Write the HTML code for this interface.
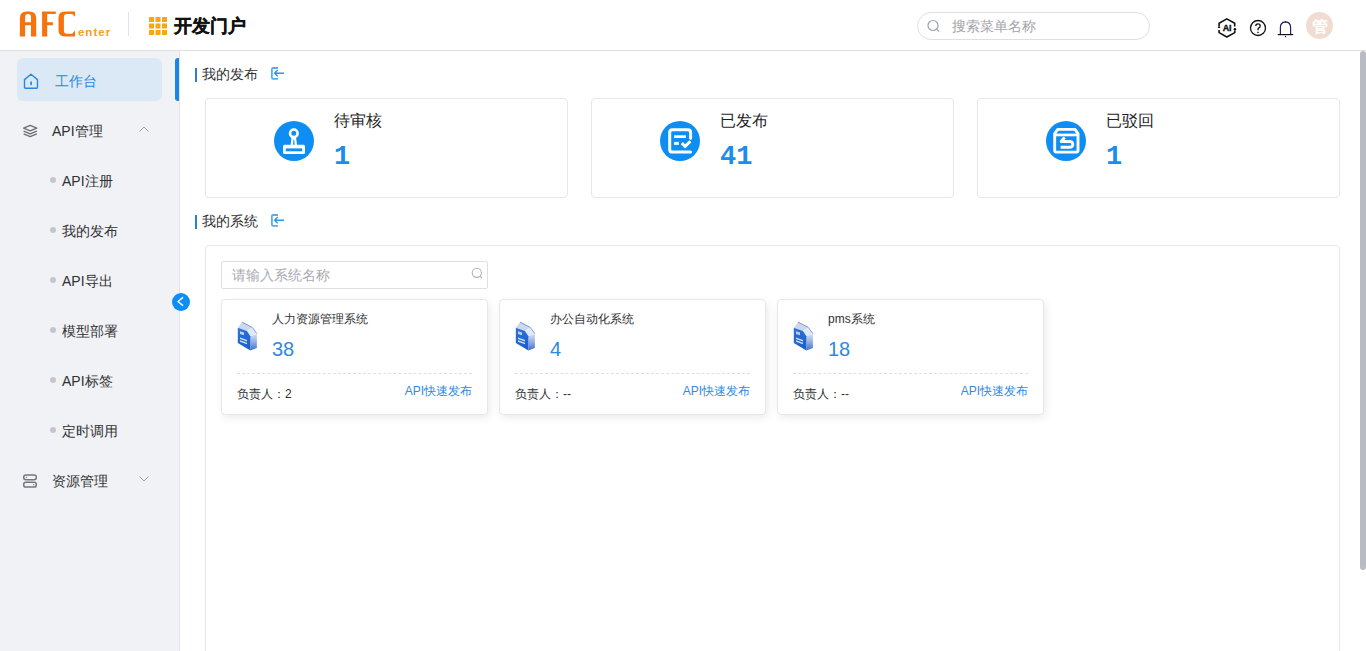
<!DOCTYPE html>
<html><head><meta charset="utf-8">
<style>
*{margin:0;padding:0;box-sizing:border-box}
html,body{width:1366px;height:651px;overflow:hidden;background:#fff;font-family:"Liberation Sans",sans-serif;color:#303133}
.abs{position:absolute}
#hdr{position:absolute;left:0;top:0;width:1366px;height:51px;background:#fff;border-bottom:1px solid #dfdfe1}
#side{position:absolute;left:0;top:51px;width:180px;height:600px;background:#f0f2f5;border-right:1px solid #e3e4e7}
.mi{position:absolute;left:0;width:180px;height:20px;font-size:14px;line-height:20px;color:#303133}
.sub{position:absolute;left:62px;margin-top:1px;font-size:14px;line-height:20px;color:#303133;white-space:nowrap}
.dot{position:absolute;left:50px;margin-top:1px;width:6px;height:6px;border-radius:50%;background:#c4c6ca}
.card{position:absolute;top:98px;width:363px;height:100px;border:1px solid #e4e7ed;border-radius:4px;background:#fff}
.circ{position:absolute;left:68px;top:22px;width:40px;height:40px;border-radius:50%;background:#0e8ef2}
.ctitle{position:absolute;left:128px;top:11px;font-size:16px;line-height:22px;color:#1f1f1f;white-space:nowrap}
.cnum{position:absolute;left:128px;top:43px;font-size:27px;line-height:30px;font-weight:bold;color:#1a8cf2;font-family:"Liberation Mono",monospace}
.stitle{position:absolute;left:195px;font-size:14px;line-height:20px;color:#303133;white-space:nowrap}
.stitle .bar{position:absolute;left:0;top:4px;width:2px;height:14px;background:#2b7fc8}
.stitle .t{position:absolute;left:7px;top:0}
.scard{position:absolute;top:299px;width:267px;height:116px;background:#fff;border:1px solid #e6e7eb;border-radius:4px;box-shadow:2px 3px 8px rgba(0,0,0,0.08)}
.scard .nm{position:absolute;left:50px;top:11px;font-size:12px;line-height:16px;color:#303133;white-space:nowrap}
.scard .n{position:absolute;left:50px;top:37px;font-size:20px;line-height:24px;color:#2e89e0}
.scard .dash{position:absolute;left:15px;top:73px;width:235px;height:1px;border-top:1px dashed #dcdfe6}
.scard .own{position:absolute;left:15px;top:86px;font-size:12px;line-height:16px;color:#303133;white-space:nowrap}
.scard .lnk{position:absolute;right:15px;top:83px;font-size:12px;line-height:16px;color:#2f8ae3;white-space:nowrap}
.scard .ic{position:absolute;left:15px;top:21px}
</style></head><body>

<div id="hdr">
  <!-- logo -->
  <svg class="abs" style="left:0;top:0" width="130" height="50" viewBox="0 0 130 50">
    <g fill="#f5730a">
      <path fill-rule="evenodd" d="M19.9 36.5V18Q19.9 11.4 26.5 11.4H29.6Q36.2 11.4 36.2 18V36.5H31V25.2H25.1V36.5ZM25.1 22.3H31V16.9Q31 13.9 28 13.9Q25.1 13.9 25.1 16.9Z"/>
      <path d="M42.1 36.5V11.4H55.8V14.1H47.2V22.3H52.9V25.2H47.2V36.5Z"/>
      <path d="M75 11.4H64.9Q58.5 11.4 58.5 17.8V30.1Q58.5 36.5 64.9 36.5H75V30.6L72.2 33.8H66.9Q63.9 33.8 63.9 30.8V17.1Q63.9 14.1 66.9 14.1H72.2L75 16.8Z"/>
    </g>
    <text x="77.9" y="36.1" font-family="Liberation Sans" font-weight="bold" font-size="11.5" fill="#f2a11c" textLength="32.4" lengthAdjust="spacing">enter</text>
    <rect x="128" y="12" width="1" height="24" fill="#dfe2e8"/>

  </svg>
  <svg class="abs" style="left:148px;top:16px" width="20" height="20" viewBox="148 16 20 20">
    <g fill="#f7a812">
      <rect x="149" y="17" width="5" height="5"/><rect x="155.5" y="17" width="5" height="5"/><rect x="162" y="17" width="5" height="5"/>
      <rect x="149" y="23.5" width="5" height="5"/><rect x="155.5" y="23.5" width="5" height="5"/><rect x="162" y="23.5" width="5" height="5"/>
      <rect x="149" y="30" width="5" height="5"/><rect x="155.5" y="30" width="5" height="5"/><rect x="162" y="30" width="5" height="5"/>
    </g>
  </svg>
  <div class="abs" style="left:174px;top:14px;font-size:18px;line-height:25px;font-weight:bold;color:#111;white-space:nowrap;-webkit-text-stroke:0.35px #111">开发门户</div>

  <!-- search -->
  <div class="abs" style="left:917px;top:12px;width:233px;height:28px;border:1px solid #dcdfe6;border-radius:14px"></div>
  <svg class="abs" style="left:926px;top:19px" width="15" height="14" viewBox="0 0 15 14">
    <circle cx="7" cy="6.5" r="5" fill="none" stroke="#a0a3a8" stroke-width="1.2"/>
    <path d="M10.6 10.1L13 12.5" stroke="#a0a3a8" stroke-width="1.2"/>
  </svg>
  <div class="abs" style="left:952px;top:16px;font-size:14px;line-height:20px;color:#a3a4a8;white-space:nowrap">搜索菜单名称</div>

  <!-- right icons -->
  <svg class="abs" style="left:1216px;top:17px" width="22" height="22" viewBox="0 0 22 22">
    <path d="M3.1 9.3V6.3L10.8 1.9L18.7 6.3V9.4" fill="none" stroke="#111" stroke-width="1.6" stroke-linejoin="round"/>
    <path d="M18.8 13.6V15.6L10.8 20L3.1 15.6V13.1" fill="none" stroke="#111" stroke-width="1.6" stroke-linejoin="round"/>
    <path d="M1.6 10.9L3.1 8.6L4.4 10.9Z" fill="#111"/>
    <circle cx="18.9" cy="12.3" r="1.3" fill="#111"/>
    <text x="11" y="13.8" text-anchor="middle" font-family="Liberation Sans" font-weight="bold" font-size="9" fill="#111" stroke="#111" stroke-width="0.35" letter-spacing="-0.2">AI</text>
  </svg>
  <svg class="abs" style="left:1248px;top:18px" width="20" height="20" viewBox="0 0 20 20">
    <circle cx="10" cy="10" r="7.5" fill="none" stroke="#111" stroke-width="1.3"/>
    <path d="M7.8 8.1Q7.8 5.9 10 5.9Q12.2 5.9 12.2 7.9Q12.2 9.2 10.9 9.9Q10 10.5 10 11.6V12.2" fill="none" stroke="#111" stroke-width="1.3"/>
    <rect x="9.3" y="13.8" width="1.4" height="1.3" fill="#111"/>
  </svg>
  <svg class="abs" style="left:1276px;top:19px" width="20" height="20" viewBox="0 0 20 20">
    <path d="M4.4 15.6V8.5Q4.4 3.2 9.5 2.9Q14.6 3.2 14.6 8.5V15.6" fill="none" stroke="#2a1f5a" stroke-width="1.2"/>
    <path d="M1.7 15.6H17.2" stroke="#111" stroke-width="1.2"/>
    <rect x="8.9" y="17" width="1.2" height="1.2" fill="#111"/>
    <path d="M8.5 3.3L9.5 1.9L10.5 3.3Z" fill="#111"/>
  </svg>
  <div class="abs" style="left:1306px;top:12px;width:27px;height:27px;border-radius:50%;background:#f1ddd0;color:#fff;font-size:16px;line-height:29px;text-align:center;font-weight:bold">管</div>
</div>

<div id="side">
  <div class="abs" style="left:17px;top:7px;width:145px;height:43px;border-radius:6px;background:#dbe9f7"></div>
  <!-- home icon -->
  <svg class="abs" style="left:22px;top:21px" width="18" height="18" viewBox="0 0 18 18">
    <path d="M2.5 7.6L9 2.2L15.5 7.6V15.3Q15.5 16.3 14.5 16.3H3.5Q2.5 16.3 2.5 15.3Z" fill="none" stroke="#2b86e0" stroke-width="1.4" stroke-linejoin="round"/>
    <path d="M9.1 10V12.4" stroke="#2b86e0" stroke-width="1.7" stroke-linecap="round"/>
  </svg>
  <div class="sub" style="left:55px;top:19px;color:#2b86e0">工作台</div>

  <!-- API管理 -->
  <svg class="abs" style="left:21px;top:72px" width="18" height="16" viewBox="0 0 18 16">
    <path d="M9.2 2.3L15.8 5.1L9.2 7.9L2.6 5.1Z" fill="none" stroke="#6b6f75" stroke-width="1.3" stroke-linejoin="round"/>
    <path d="M2.6 8.1L9.2 10.9L15.8 8.1" fill="none" stroke="#6b6f75" stroke-width="1.3" stroke-linejoin="round"/>
    <path d="M2.6 10.9L9.2 13.7L15.8 10.9" fill="none" stroke="#6b6f75" stroke-width="1.3" stroke-linejoin="round"/>
  </svg>
  <div class="sub" style="left:52px;top:69px">API管理</div>
  <svg class="abs" style="left:138px;top:74px" width="12" height="8" viewBox="0 0 12 8">
    <path d="M1.5 6.5L6 2L10.5 6.5" fill="none" stroke="#9a9da3" stroke-width="1"/>
  </svg>

  <div class="dot" style="top:125px"></div><div class="sub" style="top:119px">API注册</div>
  <div class="dot" style="top:175px"></div><div class="sub" style="top:169px">我的发布</div>
  <div class="dot" style="top:225px"></div><div class="sub" style="top:219px">API导出</div>
  <div class="dot" style="top:275px"></div><div class="sub" style="top:269px">模型部署</div>
  <div class="dot" style="top:325px"></div><div class="sub" style="top:319px">API标签</div>
  <div class="dot" style="top:375px"></div><div class="sub" style="top:369px">定时调用</div>

  <!-- 资源管理 -->
  <svg class="abs" style="left:22px;top:422px" width="16" height="16" viewBox="0 0 16 16">
    <rect x="1.7" y="1.9" width="12.6" height="4.9" rx="2.2" fill="none" stroke="#74777c" stroke-width="1.5"/>
    <rect x="1.7" y="9.2" width="12.6" height="4.9" rx="2.2" fill="none" stroke="#74777c" stroke-width="1.5"/>
    <rect x="3.8" y="3.8" width="1.2" height="1" fill="#6b6f76"/><rect x="11" y="11.2" width="1.2" height="1" fill="#6b6f76"/>
  </svg>
  <div class="sub" style="left:52px;top:419px">资源管理</div>
  <svg class="abs" style="left:138px;top:424px" width="12" height="8" viewBox="0 0 12 8">
    <path d="M1.5 1.5L6 6L10.5 1.5" fill="none" stroke="#9a9da3" stroke-width="1"/>
  </svg>
</div>
<!-- collapse button -->
<div class="abs" style="left:172px;top:293px;width:18px;height:18px;border-radius:50%;background:#0d8ef5"></div>
<svg class="abs" style="left:172px;top:293px" width="18" height="18" viewBox="0 0 18 18">
  <path d="M10.7 4.6L6 8.5L10.7 12.4" fill="none" stroke="#fff" stroke-width="1.4" stroke-linecap="round" stroke-linejoin="round"/>
</svg>

<!-- section 1 -->
<div class="stitle" style="top:64px"><div class="bar"></div><div class="t">我的发布</div></div>
<svg class="abs" style="left:270px;top:66px" width="16" height="15" viewBox="0 0 16 15">
  <path d="M8 2H3Q1.9 2 1.9 3.1V11.8Q1.9 12.9 3 12.9H8" fill="none" stroke="#5aaee8" stroke-width="1.8"/>
  <path d="M14 7.2H4.6M7.7 4.1L4.6 7.2L7.7 10.3" fill="none" stroke="#2f95dc" stroke-width="1.4"/>
</svg>

<div class="card" style="left:205px">
  <div class="circ"></div>
  <svg class="abs" style="left:68px;top:22px" width="40" height="40" viewBox="0 0 40 40">
    <circle cx="19.8" cy="12.3" r="3.8" fill="none" stroke="#fff" stroke-width="2.6"/>
    <path d="M17.6 15.8H22L23 24.2H16.6Z" fill="#fff"/>
    <path d="M19.5 18.4H20.1L20.7 24H19Z" fill="#0e8ef2"/>
    <path d="M9 25.3Q9 23.8 10.5 23.8H29.5Q31 23.8 31 25.3V31.5Q31 33 29.5 33H10.5Q9 33 9 31.5Z" fill="#fff"/>
    <rect x="11.8" y="27.4" width="16.4" height="2.9" fill="#0e8ef2"/>
  </svg>
  <div class="ctitle">待审核</div>
  <div class="cnum">1</div>
</div>
<div class="card" style="left:591px">
  <div class="circ"></div>
  <svg class="abs" style="left:68px;top:22px" width="40" height="40" viewBox="0 0 40 40">
    <path d="M30.6 17.2V11.4Q30.6 8.7 27.9 8.7H12.4Q9.7 8.7 9.7 11.4V28.4Q9.7 31.1 12.4 31.1H30.5" fill="none" stroke="#fff" stroke-width="3" stroke-linecap="round"/>
    <rect x="14.1" y="14.3" width="11.8" height="2.7" fill="#fff"/>
    <rect x="14.1" y="20.9" width="4.7" height="3" fill="#fff"/>
    <path d="M21.8 22.2L25.1 25.4L30.4 20.2" fill="none" stroke="#fff" stroke-width="3"/>
  </svg>
  <div class="ctitle">已发布</div>
  <div class="cnum">41</div>
</div>
<div class="card" style="left:977px">
  <div class="circ"></div>
  <svg class="abs" style="left:68px;top:22px" width="40" height="40" viewBox="0 0 40 40">
    <path d="M8.7 12.6L11.7 8.4H29L32 12.6V29.6Q32 31.1 30.5 31.1H10.2Q8.7 31.1 8.7 29.6Z" fill="none" stroke="#fff" stroke-width="2.9" stroke-linejoin="round"/>
    <rect x="8.7" y="12.6" width="23.3" height="2.7" fill="#fff"/>
    <path d="M18.6 16.4L15.2 20.5H24A2.85 2.85 0 0 1 24 26.2H14.6" fill="none" stroke="#fff" stroke-width="3" stroke-linejoin="round"/>
  </svg>
  <div class="ctitle">已驳回</div>
  <div class="cnum">1</div>
</div>

<!-- section 2 -->
<div class="stitle" style="top:211px"><div class="bar"></div><div class="t">我的系统</div></div>
<svg class="abs" style="left:270px;top:213px" width="16" height="15" viewBox="0 0 16 15">
  <path d="M8 2H3Q1.9 2 1.9 3.1V11.8Q1.9 12.9 3 12.9H8" fill="none" stroke="#5aaee8" stroke-width="1.8"/>
  <path d="M14 7.2H4.6M7.7 4.1L4.6 7.2L7.7 10.3" fill="none" stroke="#2f95dc" stroke-width="1.4"/>
</svg>

<div class="abs" style="left:205px;top:245px;width:1135px;height:420px;border:1px solid #e4e7ed;border-radius:4px"></div>
<div class="abs" style="left:221px;top:261px;width:267px;height:28px;border:1px solid #dcdfe6;border-radius:2px"></div>
<div class="abs" style="left:232px;top:265px;font-size:14px;line-height:20px;color:#a8abb2;white-space:nowrap">请输入系统名称</div>
<svg class="abs" style="left:470px;top:266px" width="14" height="14" viewBox="0 0 14 14">
  <circle cx="6.8" cy="6.8" r="4.6" fill="none" stroke="#b0b3b8" stroke-width="1.1"/>
  <path d="M10.2 10.2L12 12" stroke="#b0b3b8" stroke-width="1.1"/>
</svg>

<div class="scard" style="left:221px">
  <svg class="ic" width="22" height="31" viewBox="0 0 22 31"><use href="#bk"/></svg>
  <div class="nm">人力资源管理系统</div><div class="n">38</div>
  <div class="dash"></div>
  <div class="own">负责人：2</div><div class="lnk">API快速发布</div>
</div>
<div class="scard" style="left:499px">
  <svg class="ic" width="22" height="31" viewBox="0 0 22 31"><use href="#bk"/></svg>
  <div class="nm">办公自动化系统</div><div class="n">4</div>
  <div class="dash"></div>
  <div class="own">负责人：--</div><div class="lnk">API快速发布</div>
</div>
<div class="scard" style="left:777px">
  <svg class="ic" width="22" height="31" viewBox="0 0 22 31"><use href="#bk"/></svg>
  <div class="nm">pms系统</div><div class="n">18</div>
  <div class="dash"></div>
  <div class="own">负责人：--</div><div class="lnk">API快速发布</div>
</div>

<svg width="0" height="0" style="position:absolute">
  <defs>
    <linearGradient id="gside" x1="0" y1="0" x2="1" y2="0">
      <stop offset="0" stop-color="#a9c3ee"/><stop offset="1" stop-color="#5b86d6"/>
    </linearGradient>
    <linearGradient id="gfront" x1="0" y1="0" x2="0.3" y2="1">
      <stop offset="0" stop-color="#2d74dc"/><stop offset="1" stop-color="#1e60c9"/>
    </linearGradient>
    <linearGradient id="gright" x1="0" y1="0" x2="0" y2="1">
      <stop offset="0" stop-color="#d6e0f3"/><stop offset="0.5" stop-color="#93aee3"/><stop offset="1" stop-color="#3f6fcc"/>
    </linearGradient>
    <g id="bk">
      <path d="M0.8 6.7L5.1 1.1L15.3 6.4L10 10Z" fill="#cdd8ee"/>
      <path d="M5.1 1.1L15.3 6.4" stroke="#5a7fc6" stroke-width="0.8" fill="none"/>
      <path d="M10 10L15.3 6.4L19.9 12.8L13.4 15.3Z" fill="#e2e9f6"/>
      <path d="M15.3 6.4L19.9 12.8" stroke="#6a8ccc" stroke-width="0.8" fill="none"/>
      <path d="M13.4 15.3L19.9 12.8V26.9L13.4 29.4Z" fill="url(#gright)"/>
      <path d="M0.8 6.7L10 10L13.4 15.3V29.4L0.8 22Z" fill="url(#gfront)"/>
      <path d="M3 10.2L7 11.5V14.2L3 12.9Z" fill="#b9d3f6"/>
      <path d="M3 16.6L10 19.1V20.6L3 18.1Z" fill="#cfe0fa"/>
      <path d="M3 19.3L10 21.8V23.3L3 20.8Z" fill="#cfe0fa"/>
    </g>
  </defs>
</svg>

<!-- scrollbar -->
<div class="abs" style="left:1360px;top:51px;width:6px;height:519px;border-radius:3px;background:#b8bbc1"></div>

<!-- content -->
<div class="abs" style="left:175px;top:58px;width:4px;height:43px;border-radius:3px 0 0 3px;background:#1a86e8"></div>
</body></html>
